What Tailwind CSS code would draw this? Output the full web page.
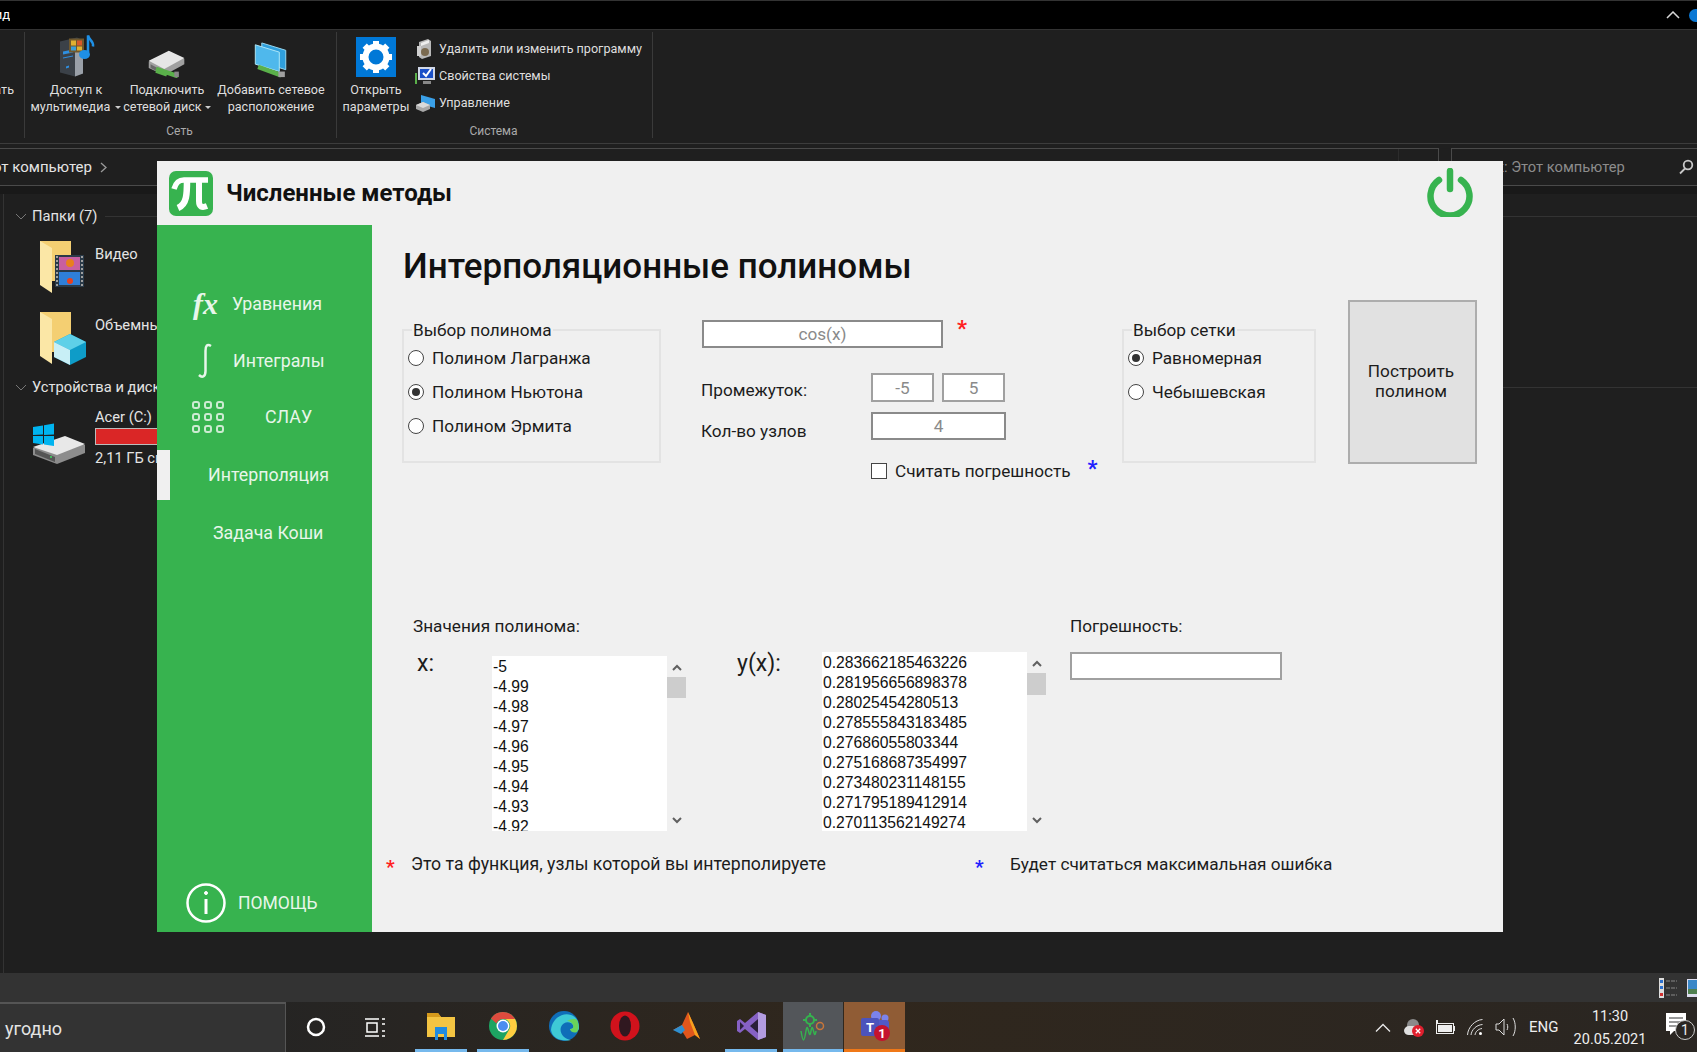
<!DOCTYPE html>
<html lang="ru">
<head>
<meta charset="UTF-8">
<title>Численные методы</title>
<script src="https://cdn.jsdelivr.net/npm/@tailwindcss/browser@4"></script>
</head>
<body class="bg-[#1f1f1f] font-['Roboto',sans-serif]">
<div class="relative w-[1697px] h-[1052px] overflow-hidden flex flex-col text-[#dcdcdc]">

  <!-- Explorer title bar -->
  <div class="h-[30px] shrink-0 bg-black border-t border-b border-[#333] flex items-center justify-between">
    <div class="w-[10px] overflow-hidden flex justify-end text-[13px] text-white"><span class="shrink-0">Вид</span></div>
    <div class="flex items-center gap-[9px]">
      <svg width="14" height="8" viewBox="0 0 14 8" fill="none" stroke="#d8d8d8" stroke-width="1.5"><path d="M1 7l6-6 6 6"/></svg>
      <div class="w-[11px] h-[13px] rounded-l-full bg-[#0a78d4] -mr-[3px]"></div>
    </div>
  </div>

  <!-- Ribbon -->
  <div class="h-[113px] shrink-0 flex pt-[2px] text-[12.600px] leading-[17px] text-[#dedede]">
    <div class="w-[25px] h-[106px] border-r border-[#3a3a3a] overflow-hidden flex justify-end pt-[49px] pr-[10px]"><span class="shrink-0">Создать</span></div>
    <!-- Сеть -->
    <div class="w-[312px] h-[106px] border-r border-[#3a3a3a] flex flex-col pl-[7px]">
      <div class="flex h-[90px] shrink-0">
        <div class="w-[88px] flex flex-col items-center">
          <div class="h-[49px] flex items-end pb-[3px]">
            <svg width="42" height="45" viewBox="0 0 42 44">
              <path d="M5 8l17-4 6 3v33l-8 3-15-4z" fill="#3b4148"/><path d="M20 11l8-3v32l-8 3z" fill="#9aa0a8"/>
              <path d="M8 18l10-2v3l-10 2zM8 24l10-2v1l-10 2zM11 33l3-1v2l-3 1z" fill="#2f8fe0"/>
              <rect x="14" y="5" width="15" height="14" fill="#70582c"/><rect x="16" y="7" width="5" height="5" fill="#e0b030"/><rect x="22" y="7" width="5" height="5" fill="#d85828"/><rect x="16" y="13" width="5" height="4" fill="#3aa0d8"/><rect x="22" y="13" width="5" height="4" fill="#e0b030"/>
              <path d="M33 2v17" stroke="#1e90e6" stroke-width="2.5"/><path d="M33 2c1 5 6 5 5 11" fill="none" stroke="#1e90e6" stroke-width="2.5"/><ellipse cx="29.500" cy="21" rx="5.500" ry="4.500" fill="#1e90e6"/>
            </svg>
          </div>
          <span class="text-center whitespace-nowrap">Доступ к<br>мультимедиа <i class="inline-block align-middle ml-[2px] border-x-[3px] border-t-[3px] border-x-transparent border-t-[#ccc]"></i></span>
        </div>
        <div class="w-[94px] flex flex-col items-center">
          <div class="h-[49px] flex items-end pb-[3px]">
            <svg width="42" height="31" viewBox="0 0 42 34">
              <path d="M1 16L23 5l17 8v6L18 31 1 23z" fill="#a0a0a0"/><path d="M1 15L23 4l17 8-22 12z" fill="#e6e6e6"/>
              <path d="M3 19l13 7v4L3 23z" fill="#6a6a6a"/><path d="M9 24l24 8M9 26l12 4" stroke="#5ab04a" stroke-width="5"/><rect x="29" y="27" width="5" height="6" fill="#888"/>
            </svg>
          </div>
          <span class="text-center whitespace-nowrap">Подключить<br>сетевой диск <i class="inline-block align-middle border-x-[3px] border-t-[3px] border-x-transparent border-t-[#ccc]"></i></span>
        </div>
        <div class="w-[114px] flex flex-col items-center">
          <div class="h-[49px] flex items-end pb-[3px]">
            <svg width="34" height="36" viewBox="0 0 36 39">
              <path d="M8 1l26 8v21L8 22z" fill="#2f9fdc" stroke="#9ee0f8"/><path d="M1 3l26 8v21L1 24z" fill="#4fb8ec" stroke="#b5ecfb"/>
              <path d="M4 27l25 9" stroke="#5ab04a" stroke-width="5"/><rect x="26" y="32" width="7" height="6" fill="#a0a0a0"/>
            </svg>
          </div>
          <span class="text-center whitespace-nowrap">Добавить сетевое<br>расположение</span>
        </div>
      </div>
      <div class="text-center text-[12px] text-[#aaa] pr-[9px] mt-[1px]">Сеть</div>
    </div>
    <!-- Система -->
    <div class="w-[316px] h-[106px] border-r border-[#3a3a3a] flex flex-col">
      <div class="flex h-[90px] shrink-0">
        <div class="w-[78px] flex flex-col items-center">
          <div class="h-[49px] flex items-end pb-[4px]">
            <svg width="40" height="40" viewBox="0 0 40 40">
              <rect width="40" height="40" fill="#0078d7"/>
              <circle cx="20" cy="20" r="10.500" fill="none" stroke="#fff" stroke-width="6"/>
              <path d="M20 4v6M20 30v6M4 20h6M30 20h6M8.700 8.700l4.200 4.200M27.100 27.100l4.200 4.200M8.700 31.300l4.200-4.200M27.100 12.900l4.200-4.200" stroke="#fff" stroke-width="6"/>
            </svg>
          </div>
          <span class="text-center">Открыть<br>параметры</span>
        </div>
        <div class="flex flex-col pt-[3px]">
          <div class="h-[27px] flex items-center gap-[4px]">
            <svg width="20" height="22" viewBox="0 0 20 22"><path d="M4 4l9-3 3 2v15l-9 3-3-2z" fill="#b8b8b8"/><path d="M6 5l8-3v3l-8 3z" fill="#eee"/><circle cx="10" cy="14" r="4" fill="#7a6a50"/><path d="M2 8h4v10H2z" fill="#d0d0d0"/></svg>
            <span>Удалить или изменить программу</span>
          </div>
          <div class="h-[27px] flex items-center gap-[4px]">
            <svg width="20" height="20" viewBox="0 0 20 20"><rect x="3" y="1" width="17" height="13" fill="#d0d8e8"/><rect x="5" y="3" width="13" height="9" fill="#1a50c8"/><path d="M8 7l3 3 5-7" fill="none" stroke="#fff" stroke-width="2"/><rect x="8" y="15" width="8" height="3" fill="#888"/><rect x="0" y="7" width="2" height="11" fill="#5ab04a"/></svg>
            <span>Свойства системы</span>
          </div>
          <div class="h-[27px] flex items-center gap-[4px]">
            <svg width="20" height="20" viewBox="0 0 20 20"><path d="M6 2l14 4v9L6 11z" fill="#3aa0e8"/><path d="M1 12l7-3 7 3v4l-7 3-7-3z" fill="#a8a8a8"/><path d="M1 12l7-3 7 3-7 3z" fill="#dadada"/></svg>
            <span>Управление</span>
          </div>
        </div>
      </div>
      <div class="text-center text-[12px] text-[#aaa] mt-[1px] pr-[2px]">Система</div>
    </div>
  </div>

  <!-- Address row -->
  <div class="h-[51px] shrink-0 flex flex-col">
    <div class="h-[43px] border-t border-[#3c3c3c] pt-[4px] flex">
      <div class="w-[1439px] h-[38px] border-r border-y border-[#4a4a4a] flex items-center text-[15px] text-[#e4e4e4]">
        <div class="w-[92px] overflow-hidden flex justify-end"><span class="shrink-0">Этот компьютер</span></div>
        <svg class="ml-[8px]" width="7" height="11" viewBox="0 0 7 11" fill="none" stroke="#999" stroke-width="1.300"><path d="M1 1l5 4.500-5 4.500"/></svg>
        <div class="ml-auto w-[40px] h-full border-l border-[#2c2c2c]"></div>
      </div>
      <div class="ml-[12px] flex-1 h-[38px] border-l border-y border-[#4a4a4a] flex items-center justify-between pl-[9px] pr-[3px] text-[14.700px] text-[#8c8c8c]">
        <span>Поиск: Этот компьютер</span>
        <svg width="16" height="16" viewBox="0 0 16 16" fill="none" stroke="#c8c8c8" stroke-width="1.800"><circle cx="10" cy="6" r="4.300"/><path d="M7 9.500l-5 5"/></svg>
      </div>
    </div>
    <div class="h-[8px] bg-[#191919]"></div>
  </div>

  <!-- Explorer body -->
  <div class="flex-1 ml-[3px] border-l border-[#333] pl-[11px] pt-[12px] text-[14.700px] text-[#e4e4e4]">
    <div class="h-[20px] flex items-center">
      <svg width="12" height="7" viewBox="0 0 12 7" fill="none" stroke="#777"><path d="M1 1l5 5 5-5"/></svg>
      <span class="ml-[5px]">Папки (7)</span>
      <div class="ml-[8px] flex-1 h-px bg-[#333]"></div>
    </div>
    <div class="mt-[15px] h-[51px] flex">
      <svg class="ml-[25px]" width="44" height="52" viewBox="0 0 44 52">
        <path d="M0 0h31v40H0z" fill="#f4cf72"/><path d="M0 0l12 7v45L0 44z" fill="#fbe7a6"/>
        <rect x="15" y="14" width="29" height="32" fill="#2a3a48"/><rect x="19" y="16" width="21" height="13" fill="#c85fa0"/><rect x="19" y="31" width="21" height="13" fill="#2f7fd8"/><circle cx="30" cy="22" r="4" fill="#e8801e"/><circle cx="30" cy="40" r="3" fill="#e8401e"/>
        <path d="M17 15v30M42 15v30" stroke="#a0a0a0" stroke-width="2" stroke-dasharray="2 2"/>
      </svg>
      <span class="ml-[11px] mt-[2px]">Видео</span>
    </div>
    <div class="mt-[20px] h-[53px] flex">
      <svg class="ml-[25px]" width="46" height="53" viewBox="0 0 46 53">
        <path d="M0 0h31v40H0z" fill="#f4cf72"/><path d="M0 0l12 7v45L0 44z" fill="#fbe7a6"/>
        <path d="M14 30l16-8 16 8v15l-16 8-16-8z" fill="#0e9cc8"/><path d="M14 30l16 8 16-8-16-8z" fill="#5ed0e8"/><path d="M14 30l16 8v15l-16-8z" fill="#c8eff6"/>
      </svg>
      <span class="ml-[9px] mt-[2px] whitespace-nowrap">Объемные объекты</span>
    </div>
    <div class="mt-[12px] h-[20px] flex items-center">
      <svg width="12" height="7" viewBox="0 0 12 7" fill="none" stroke="#777"><path d="M1 1l5 5 5-5"/></svg>
      <span class="ml-[5px] whitespace-nowrap">Устройства и диски (2)</span>
      <div class="ml-[8px] flex-1 h-px bg-[#333]"></div>
    </div>
    <div class="mt-[10px] flex">
      <svg class="ml-[18px] mt-[16px] shrink-0" width="52" height="41" viewBox="0 0 52 41">
        <path d="M0 25L32 14l20 8v8L24 41 0 32z" fill="#8c8c8c"/><path d="M0 24L32 13l20 8-28 11z" fill="#e8e8e8"/>
        <path d="M2 26l20 8v5L2 31z" fill="#555"/><circle cx="18" cy="34" r="1" fill="#3ddc60"/>
        <path d="M0 4l10-1.500v9L0 12zM11 2.300L21 .5v11L11 12zM0 13h10v8.500L0 20zM11 13h10v10L11 21.500z" fill="#00b4f0"/>
      </svg>
      <div class="ml-[10px]">
        <div class="h-[20px] leading-[20px]">Acer (C:)</div>
        <div class="mt-[1px] w-[300px] h-[17px] border border-[#bbb] bg-[#da2626]"></div>
        <div class="mt-[3px] h-[20px] leading-[20px] whitespace-nowrap">2,11 ГБ свободно из 237 ГБ</div>
      </div>
    </div>
  </div>

  <!-- Explorer status bar -->
  <div class="h-[29px] shrink-0 bg-[#333] flex items-center justify-end gap-[10px] -mr-[8px]">
    <svg width="18" height="20" viewBox="0 0 18 20"><rect width="5" height="20" fill="#ddd"/><rect x="1" y="2" width="3" height="3" fill="#2a70d0"/><rect x="1" y="8" width="3" height="3" fill="#2a70d0"/><rect x="1" y="15" width="3" height="3" fill="#d03030"/><path d="M7 3h11M7 10h11M7 17h11" stroke="#888" stroke-dasharray="4 1"/></svg>
    <svg width="18" height="18" viewBox="0 0 18 18"><rect width="18" height="18" fill="#dde"/><rect x="1" y="1" width="16" height="12" fill="#3a88c8"/><rect x="1" y="10" width="16" height="5" fill="#508050"/></svg>
  </div>

  <!-- Taskbar -->
  <div class="h-[50px] shrink-0 relative flex bg-linear-to-r from-[#202326] via-[#30271d] to-[#2a2622]">
    <div class="w-[286px] h-full bg-[#333] border-t-2 border-r border-[#555] flex items-center pl-[5px] text-[18px] text-[#e4e4e4]">угодно</div>
    <div class="flex items-center w-[60px] justify-center">
      <svg width="20" height="20" viewBox="0 0 20 20" fill="none" stroke="#fff" stroke-width="2.500"><circle cx="10" cy="10" r="8"/></svg>
    </div>
    <div class="flex items-center w-[58px] justify-center -ml-[1px]">
      <svg width="21" height="19" viewBox="0 0 21 19" fill="none" stroke="#fff" stroke-width="1.500"><path d="M1 1h14M1 18h14M3 5h10v9H3zM18 1h3M18 6h3M18 13h3M18 18h3"/></svg>
    </div>
    <div class="w-[52px] ml-[12px] border-b-[3px] border-[#76b9ed] flex items-center justify-center">
      <svg width="28" height="28" viewBox="0 0 28 28"><path d="M0 1h11l3 4h14v20H0z" fill="#f3c442"/><path d="M0 1h11l3 4H0z" fill="#d59a1c"/><path d="M8 15h12v13h-3v-6h-6v6H8z" fill="#1f8be0"/></svg>
    </div>
    <div class="w-[52px] ml-[10px] border-b-[3px] border-[#76b9ed] flex items-center justify-center">
      <svg width="28" height="28" viewBox="0 0 28 28"><circle cx="14" cy="14" r="14" fill="#1da462"/><path d="M2 6.500A14 14 0 0 1 14 0a14 14 0 0 1 12.100 7H14a7 7 0 0 0-6.500 4.500z" fill="#dd4b3e"/><path d="M26.100 7A14 14 0 0 1 14 28l6.200-10.500A7 7 0 0 0 14 7z" fill="#ffcd40"/><circle cx="14" cy="14" r="6.500" fill="#fff"/><circle cx="14" cy="14" r="5" fill="#4a8df0"/></svg>
    </div>
    <div class="w-[52px] ml-[9px] flex items-center justify-center pb-[3px]">
      <svg width="30" height="30" viewBox="0 0 30 30"><circle cx="15" cy="15" r="15" fill="#0f6db8"/><path d="M2 19C3 7 14 1 22 4c6 2 8 8 8 13 0 5-8 4-9 1 3 0 4-2 3-4-2-4-10-4-12 2-2 6 3 12 10 13C12 31 3 27 2 19z" fill="#3ec9d6"/><path d="M28 9c2 4 2 9 0 12-2 1-6 1-7-3 3 0 4-2 3-4-1-2-3-4-6-4 3-2 8-3 10-1z" fill="#6ad35a"/></svg>
    </div>
    <div class="w-[62px] ml-[4px] flex items-center justify-center pb-[3px]">
      <svg width="30" height="30" viewBox="0 0 30 30"><circle cx="15" cy="15" r="14.500" fill="#d1121c"/><ellipse cx="15" cy="15" rx="6" ry="10.500" fill="#301820"/></svg>
    </div>
    <div class="w-[60px] ml-[2px] flex items-center justify-center pb-[3px]">
      <svg width="30" height="30" viewBox="0 0 30 30"><path d="M0 19l9-5 6-13 5 11 7 16-5-4-8 4-5-8z" fill="#e0561c"/><path d="M15 1l5 11 7 16-5-4-5-13z" fill="#f6a21e"/><path d="M0 19l9-5 3 5-4 4z" fill="#2f8fd0"/></svg>
    </div>
    <div class="w-[52px] ml-[7px] border-b-[3px] border-[#76b9ed] flex items-center justify-center">
      <svg width="30" height="30" viewBox="0 0 30 30"><path d="M22 1l8 3v22l-8 3-13-11-5 4-3-2V10l3-2 5 4z" fill="#8661c5"/><path d="M22 8v14l-8-7z" fill="#2a1f3a"/><path d="M4 11v8l4-4z" fill="#2a1f3a"/><path d="M22 1l8 3v22l-8 3z" fill="#b39ce0"/></svg>
    </div>
    <div class="w-[60px] ml-[6px] bg-[#53565a] border-b-[3px] border-[#76b9ed] flex items-center justify-center">
      <svg width="26" height="30" viewBox="0 0 26 30" fill="none"><circle cx="10" cy="9" r="4" stroke="#35b34e" stroke-width="2"/><path d="M10 2v3M10 13v3M3 9h3M14 9h3" stroke="#35b34e" stroke-width="2"/><circle cx="20" cy="15" r="3.500" stroke="#c8763a" stroke-width="1.500"/><path d="M1 20c2 12 3 12 5 0s3 12 5 0 3 12 5 0" stroke="#35b34e" stroke-width="1.500"/></svg>
    </div>
    <div class="w-[61px] ml-px bg-[#905c35] border-b-[3px] border-[#f07818] flex items-center justify-center">
      <svg width="34" height="34" viewBox="0 0 34 34"><circle cx="18" cy="7" r="5" fill="#7b83eb"/><circle cx="27" cy="9" r="3.500" fill="#7b83eb"/><rect x="14" y="11" width="17" height="15" rx="3" fill="#5059c9"/><rect x="3" y="9" width="18" height="18" rx="2" fill="#4b53bc"/><circle cx="24" cy="24" r="8" fill="#c4122f"/><text x="24" y="29" text-anchor="middle" fill="#fff" font-size="13" font-weight="700" font-family="Roboto">1</text><text x="12" y="23" text-anchor="middle" fill="#fff" font-size="13" font-weight="700" font-family="Roboto">T</text></svg>
    </div>
    <!-- Tray -->
    <div class="ml-auto flex items-center text-[#eee]">
      <svg width="16" height="9" viewBox="0 0 16 9" fill="none" stroke="#e8e8e8" stroke-width="1.300"><path d="M1 8.500l7-7 7 7"/></svg>
      <svg class="ml-[13px]" width="20" height="22" viewBox="0 0 20 22"><circle cx="9" cy="9" r="6" fill="#8a8a8a"/><path d="M0 15a5 5 0 0 1 5-5h8v9H5a5 5 0 0 1-5-4z" fill="#e0e0e0"/><circle cx="14" cy="15" r="6" fill="#e01f2d"/><path d="M11.800 12.800l4.400 4.400M16.200 12.800l-4.400 4.400" stroke="#fff" stroke-width="1.300"/></svg>
      <svg class="ml-[10px]" width="21" height="15" viewBox="0 0 21 15" fill="none"><rect x="2.500" y="3.500" width="17" height="10" stroke="#eee"/><rect x="4" y="5" width="14" height="7" fill="#eee"/><path d="M3 0v4" stroke="#eee" stroke-width="2"/><rect x="20" y="6" width="1" height="5" fill="#eee"/></svg>
      <svg class="ml-[12px]" width="16" height="17" viewBox="0 0 16 17" fill="none" stroke="#ddd"><path d="M.5 16C1 8 8 1 15.500 .5M4 16c.5-5 5-10 11.500-10.500M8 16c.3-3 3-6 7-6.500"/><circle cx="13.500" cy="14.500" r="1.500" fill="#fff" stroke="none"/></svg>
      <svg class="ml-[12px]" width="21" height="20" viewBox="0 0 21 20" fill="none" stroke="#ddd"><path d="M1 7h3l5-5v16l-5-5H1zM12 7c1 2 1 4 0 6M18 1c3 5 3 13 0 18"/></svg>
      <span class="ml-[13px] text-[15px] w-[29px]">ENG</span>
      <div class="ml-[15px] w-[74px] text-center text-[14.500px] leading-[23px] pt-[1px]">11:30<br>20.05.2021</div>
      <div class="relative ml-[19px] w-[31px] h-[34px]">
        <svg class="absolute left-0 top-[3px]" width="20" height="22" viewBox="0 0 20 22"><path d="M0 0h20v18H8l-4 4v-4H0z" fill="#fff"/><path d="M3 5h14M3 9h14M3 13h10" stroke="#333"/></svg>
        <div class="absolute left-[9px] top-[10px] w-[20px] h-[20px] rounded-full border border-[#ccc] bg-[#2a2622] text-[14px] leading-[18px] text-center">1</div>
      </div>
    </div>
  </div>

  <!-- App window -->
  <div class="absolute left-[157px] top-[161px] w-[1346px] h-[771px] bg-[#f0f0f0] flex flex-col text-[#1c1c1c] text-[17.200px] leading-[20px]">
    <div class="h-[64px] shrink-0 flex items-center pl-[12px] pr-[30px]">
      <svg width="44" height="45" viewBox="0 0 44 45" fill="none">
        <rect width="44" height="45" rx="7" fill="#37b34f"/>
        <path d="M5 18C7 11 10 9 15 9H39" stroke="#fff" stroke-width="5.500"/>
        <path d="M18 9C18 23 18 33 9 37" stroke="#fff" stroke-width="6.500"/>
        <path d="M30 9V30C30 36 33 37 38 35" stroke="#fff" stroke-width="6"/>
      </svg>
      <div class="ml-[13px] text-[24px] font-bold text-[#111]">Численные методы</div>
      <svg class="ml-auto -mt-[2px]" width="46" height="49" viewBox="0 0 46 49" fill="none" stroke="#37b34f" stroke-width="6.500" stroke-linecap="round">
        <path d="M12 12A19.500 19.500 0 1 0 34 12"/><path d="M23 3V21"/>
      </svg>
    </div>
    <div class="flex-1 flex min-h-0">
      <!-- Sidebar -->
      <aside class="relative w-[215px] bg-[#37b34f] text-[#e8f6ea] text-[17.800px]">
        <div class="h-[55px]"></div>
        <div class="h-[48px] flex items-center">
          <span class="ml-[36px] w-[39px] font-['Liberation_Serif',serif] italic font-bold text-[30px]">fx</span>
          <span>Уравнения</span>
        </div>
        <div class="h-[56px] flex items-center mt-[5px]">
          <svg class="ml-[39px]" width="18" height="36" viewBox="0 0 18 36" fill="none" stroke="#e8f6ea" stroke-width="2.500"><path d="M15 3C11 .5 9.500 3 9.500 8V28C9.500 34 6 35 3 32"/></svg>
          <span class="ml-[19px]">Интегралы</span>
        </div>
        <div class="h-[50px] flex items-center mt-[3px]">
          <div class="ml-[35px] grid grid-cols-3 gap-[4px]">
            <i class="w-[8px] h-[8px] rounded-[3px] border-2 border-[#cdebd2]"></i><i class="w-[8px] h-[8px] rounded-[3px] border-2 border-[#cdebd2]"></i><i class="w-[8px] h-[8px] rounded-[3px] border-2 border-[#cdebd2]"></i>
            <i class="w-[8px] h-[8px] rounded-[3px] border-2 border-[#cdebd2]"></i><i class="w-[8px] h-[8px] rounded-[3px] border-2 border-[#cdebd2]"></i><i class="w-[8px] h-[8px] rounded-[3px] border-2 border-[#cdebd2]"></i>
            <i class="w-[8px] h-[8px] rounded-[3px] border-2 border-[#cdebd2]"></i><i class="w-[8px] h-[8px] rounded-[3px] border-2 border-[#cdebd2]"></i><i class="w-[8px] h-[8px] rounded-[3px] border-2 border-[#cdebd2]"></i>
          </div>
          <span class="ml-[41px]">СЛАУ</span>
        </div>
        <div class="h-[58px] flex items-center mt-[4px]">
          <span class="w-[13px] h-[50px] bg-[#f0f0f0]"></span>
          <span class="ml-[38px]">Интерполяция</span>
        </div>
        <div class="h-[57px] flex items-center pl-[56px]">Задача Коши</div>
        <div class="absolute left-[29px] bottom-[9px] flex items-center">
          <svg width="40" height="40" viewBox="0 0 40 40" fill="none" stroke="#fff" stroke-width="2.500"><circle cx="20" cy="20" r="18.500"/><path d="M20 16V31" stroke-width="3"/><circle cx="20" cy="10" r="1.500" fill="#fff" stroke-width="1"/></svg>
          <span class="ml-[12px] text-[17.500px]">ПОМОЩЬ</span>
        </div>
      </aside>

      <!-- Main panel -->
      <main class="flex-1 pt-[22px]">
        <h1 class="pl-[31px] h-[40px] leading-[40px] text-[35px] font-medium text-[#111]">Интерполяционные полиномы</h1>

        <div class="mt-[13px] h-[180px] pl-[30px] flex items-start">
          <div class="relative mt-[29px] w-[259px] h-[134px] border-2 border-[#e3e3e3] pl-[4px] pt-[10px]">
            <span class="absolute left-[8px] -top-[11px] bg-[#f0f0f0] px-[1px]">Выбор полинома</span>
            <div class="h-[34px] flex items-center gap-[8px]"><span class="w-[16px] h-[16px] rounded-full bg-white border border-[#444]"></span>Полином Лагранжа</div>
            <div class="h-[34px] flex items-center gap-[8px]"><span class="w-[16px] h-[16px] rounded-full bg-white border border-[#444] flex items-center justify-center"><i class="w-[8px] h-[8px] rounded-full bg-[#333]"></i></span>Полином Ньютона</div>
            <div class="h-[34px] flex items-center gap-[8px]"><span class="w-[16px] h-[16px] rounded-full bg-white border border-[#444]"></span>Полином Эрмита</div>
          </div>

          <div class="ml-[40px] w-[421px] shrink-0">
            <div class="mt-[20px] ml-px flex">
              <div class="w-[241px] h-[28px] bg-white border-2 border-[#8a8a8a] flex items-center justify-center text-[#8a8a8a] pb-px">cos(x)</div>
              <span class="ml-[14px] -mt-[1px] text-[#ff2020] text-[22px] font-bold">*</span>
            </div>
            <div class="mt-[25px] h-[29px] flex items-center">
              <span class="w-[170px] pt-[4px]">Промежуток:</span>
              <div class="w-[63px] h-[29px] bg-white border-2 border-[#a0a0a0] flex items-center justify-center text-[#8a8a8a]">-5</div>
              <div class="ml-[8px] w-[63px] h-[29px] bg-white border-2 border-[#a0a0a0] flex items-center justify-center text-[#8a8a8a]">5</div>
            </div>
            <div class="mt-[10px] h-[28px] flex items-center">
              <span class="w-[170px] pt-[10px]">Кол-во узлов</span>
              <div class="w-[135px] h-[28px] bg-white border-2 border-[#8a8a8a] flex items-center justify-center text-[#8a8a8a]">4</div>
            </div>
            <div class="mt-[22px] ml-[170px] h-[18px] flex items-center">
              <span class="w-[16px] h-[16px] bg-white border border-[#444]"></span>
              <span class="ml-[8px]">Считать погрешность</span>
              <span class="ml-[17px] -mt-[5px] text-[#2020ff] text-[22px] font-bold">*</span>
            </div>
          </div>

          <div class="relative mt-[29px] w-[194px] h-[134px] border-2 border-[#e3e3e3] pl-[4px] pt-[10px]">
            <span class="absolute left-[8px] -top-[11px] bg-[#f0f0f0] px-[1px]">Выбор сетки</span>
            <div class="h-[34px] flex items-center gap-[8px]"><span class="w-[16px] h-[16px] rounded-full bg-white border border-[#444] flex items-center justify-center"><i class="w-[8px] h-[8px] rounded-full bg-[#333]"></i></span>Равномерная</div>
            <div class="h-[34px] flex items-center gap-[8px]"><span class="w-[16px] h-[16px] rounded-full bg-white border border-[#444]"></span>Чебышевская</div>
          </div>

          <button class="ml-[32px] w-[129px] h-[164px] bg-[#e1e1e1] border-2 border-[#adadad] text-center pr-[3px] pb-[2px]">Построить<br>полином</button>
        </div>

        <div class="mt-[136px] h-[20px] pl-[41px] flex">
          <span class="w-[657px]">Значения полинома:</span>
          <span>Погрешность:</span>
        </div>

        <div class="mt-[16px] flex items-start">
          <span class="ml-[45px] w-[75px] text-[23px] mt-[2px]">x:</span>
          <div class="mt-[4px] w-[175px] h-[175px] bg-white overflow-hidden pl-px pt-px font-['Liberation_Sans',sans-serif] text-[15.700px] leading-[20px] text-[#111]">
            <div>-5</div><div>-4.99</div><div>-4.98</div><div>-4.97</div><div>-4.96</div><div>-4.95</div><div>-4.94</div><div>-4.93</div><div>-4.92</div>
          </div>
          <div class="mt-[4px] w-[19px] h-[175px] flex flex-col items-center">
            <svg class="mt-[8px]" width="10" height="7" viewBox="0 0 10 7" fill="none" stroke="#606060" stroke-width="2"><path d="M1 6l4-4 4 4"/></svg>
            <div class="mt-[6px] w-full h-[21px] bg-[#cdcdcd]"></div>
            <svg class="mt-auto mb-[7px]" width="10" height="7" viewBox="0 0 10 7" fill="none" stroke="#606060" stroke-width="2"><path d="M1 1l4 4 4-4"/></svg>
          </div>
          <span class="ml-[51px] w-[85px] text-[23px] mt-[2px]">y(x):</span>
          <div class="w-[205px] h-[179px] bg-white overflow-hidden pl-px pt-px font-['Liberation_Sans',sans-serif] text-[15.700px] leading-[20px] text-[#111]">
            <div>0.283662185463226</div><div>0.281956656898378</div><div>0.28025454280513</div><div>0.278555843183485</div><div>0.27686055803344</div><div>0.275168687354997</div><div>0.273480231148155</div><div>0.271795189412914</div><div>0.270113562149274</div>
          </div>
          <div class="w-[19px] h-[179px] flex flex-col items-center">
            <svg class="mt-[8px]" width="10" height="7" viewBox="0 0 10 7" fill="none" stroke="#606060" stroke-width="2"><path d="M1 6l4-4 4 4"/></svg>
            <div class="mt-[6px] w-full h-[22px] bg-[#cdcdcd]"></div>
            <svg class="mt-auto mb-[7px]" width="10" height="7" viewBox="0 0 10 7" fill="none" stroke="#606060" stroke-width="2"><path d="M1 1l4 4 4-4"/></svg>
          </div>
          <div class="ml-[24px] w-[212px] h-[28px] bg-white border-2 border-[#a0a0a0]"></div>
        </div>

        <div class="mt-[23px] h-[19px] flex items-center">
          <span class="ml-[14px] w-[25px] mt-[6px] text-[#ff2020] text-[19px] font-bold">*</span>
          <span class="w-[564px] text-[17.700px] whitespace-nowrap">Это та функция, узлы которой вы интерполируете</span>
          <span class="w-[35px] mt-[6px] text-[#2020ff] text-[19px] font-bold">*</span>
          <span>Будет считаться максимальная ошибка</span>
        </div>
      </main>
    </div>
  </div>
</div>
</body>
</html>
